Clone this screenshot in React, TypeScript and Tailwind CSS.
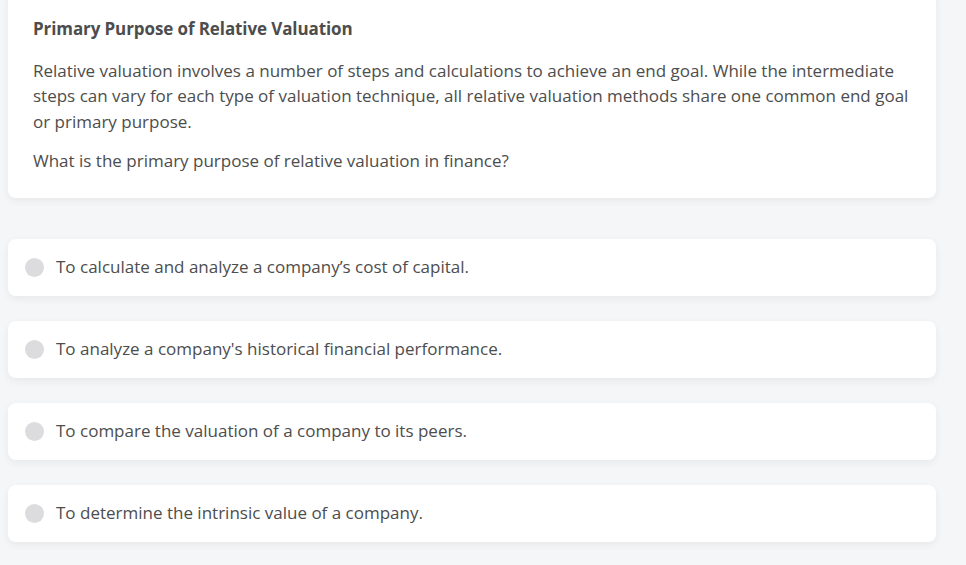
const options = [
  "To calculate and analyze a company’s cost of capital.",
  "To analyze a company's historical financial performance.",
  "To compare the valuation of a company to its peers.",
  "To determine the intrinsic value of a company.",
];

function Option({ text }: { text: string }) {
  return (
    <label className="flex h-[57px] cursor-pointer items-center gap-[12px] rounded-lg bg-white pl-[17px] pr-4 shadow-[0_3px_8px_rgba(0,0,0,0.06)]">
      <span className="h-[19px] w-[19px] shrink-0 rounded-full bg-[#dcdcde]" />
      <span className="text-[17px] text-[#4d4d4d]">{text}</span>
    </label>
  );
}

export default function App() {
  return (
    <div className="min-h-[580px] bg-[#f5f6f8] pl-[8px] pr-[30px] font-['Open_Sans',sans-serif]">
      <div className="mt-[-11px] rounded-lg bg-white px-[25px] pb-[24px] pt-[27px] shadow-[0_3px_8px_rgba(0,0,0,0.06)]">
        <h2 className="text-[17px] font-bold tracking-[-0.1px] text-[#4d4d4d]">
          Primary Purpose of Relative Valuation
        </h2>
        <p className="mt-[16px] text-[17px] leading-[25.5px] text-[#4d4d4d]">
          Relative valuation involves a number of steps and calculations to achieve an end goal. While the
          intermediate steps can vary for each type of valuation technique, all relative valuation methods
          share one common end goal or primary purpose.
        </p>
        <p className="mt-[14px] text-[17px] leading-[25.5px] text-[#4d4d4d]">
          What is the primary purpose of relative valuation in finance?
        </p>
      </div>

      <div className="mt-[41px] flex flex-col gap-[25px]">
        {options.map((o) => (
          <Option key={o} text={o} />
        ))}
      </div>
    </div>
  );
}
